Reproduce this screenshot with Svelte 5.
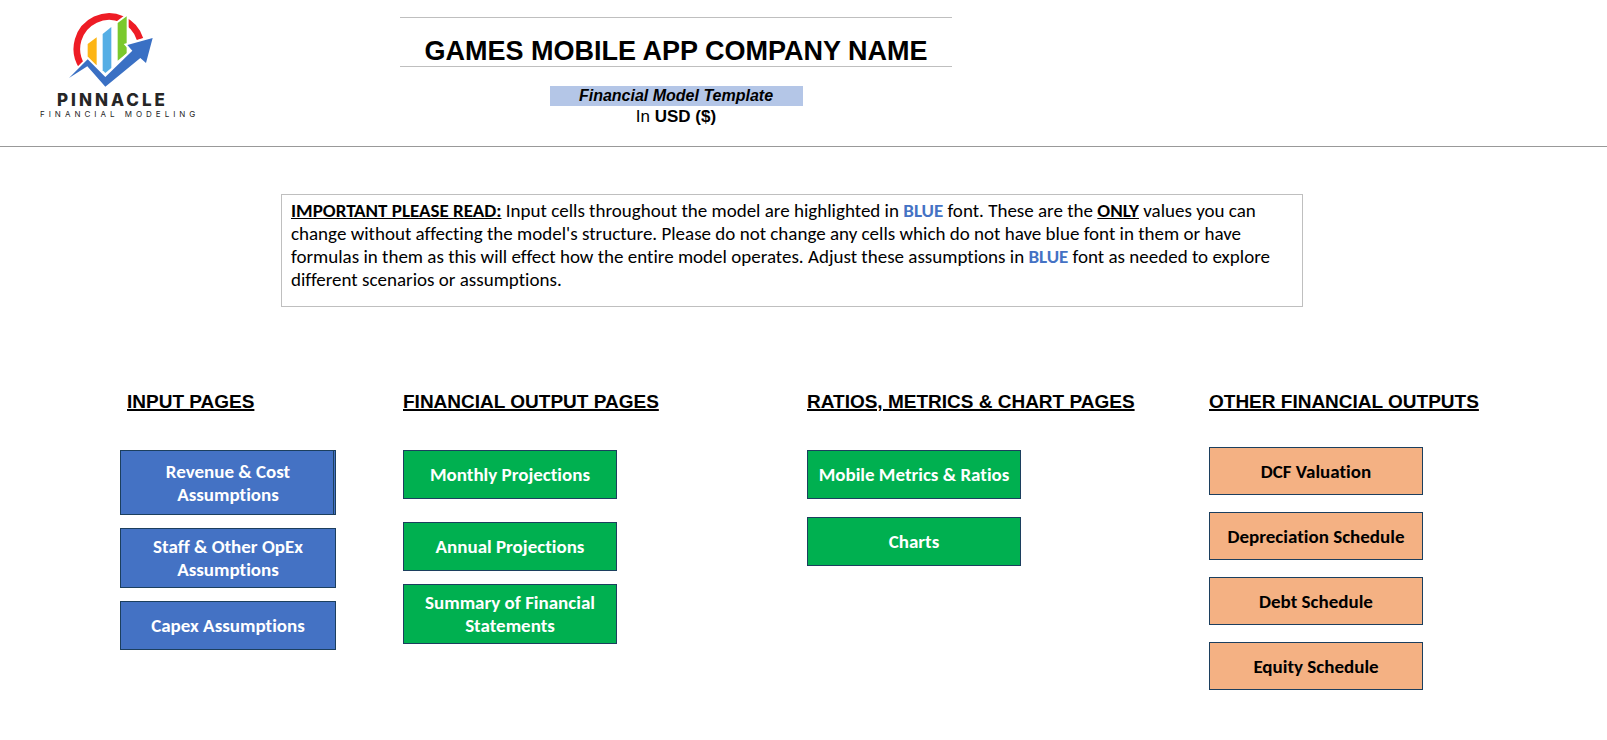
<script>
  const columns = [
    {
      title: 'INPUT PAGES',
      theme: 'blue',
      pages: [
        { label: 'Revenue & Cost Assumptions', size: 'tall', doubleEdge: true },
        { label: 'Staff & Other OpEx Assumptions', size: 'medium' },
        { label: 'Capex Assumptions' }
      ]
    },
    {
      title: 'FINANCIAL OUTPUT PAGES',
      theme: 'green',
      pages: [
        { label: 'Monthly Projections', spaced: true },
        { label: 'Annual Projections' },
        { label: 'Summary of Financial Statements', size: 'medium' }
      ]
    },
    {
      title: 'RATIOS, METRICS & CHART PAGES',
      theme: 'green wide',
      pages: [
        { label: 'Mobile Metrics & Ratios' },
        { label: 'Charts' }
      ]
    },
    {
      title: 'OTHER FINANCIAL OUTPUTS',
      theme: 'orange wide',
      pages: [
        { label: 'DCF Valuation' },
        { label: 'Depreciation Schedule' },
        { label: 'Debt Schedule' },
        { label: 'Equity Schedule' }
      ]
    }
  ];

  // Sheet anchors, e.g. "Debt Schedule" -> "#debt-schedule"
  function anchor(label) {
    return '#' + label.toLowerCase().replace(/[^a-z]+/g, '-');
  }
</script>

<header>
  <div class="logo">
    <svg viewBox="145 36 258 228" width="86" height="76" aria-hidden="true">
      <path d="M187 199 A97 97 0 1 1 361 117" fill="none" stroke="#ee1c25" stroke-width="20" />
      <!-- White outlines cut the gaps between the ring, bars and arrow -->
      <g stroke="#fff" stroke-width="12" paint-order="stroke">
        <path d="M204 132 L231 112 V195 H204 Z" fill="#fdb515" />
        <path d="M249 102 L275 81 V204 L257 219 L249 211 Z" fill="#55aee5" />
        <path d="M294 69 L321 49 V160 L294 182 Z" fill="#7ac92c" />
        <path d="M148 234 L204 178 L257 231 L338 152 L323 135 L399 114 L379 189 L362 174 L257 260 L203 199 Z" fill="#3a70c4" />
      </g>
    </svg>
    <div class="logo-name">PINNACLE</div>
    <div class="logo-sub">FINANCIAL MODELING</div>
  </div>
  <div class="heading">
    <h1>GAMES MOBILE APP COMPANY NAME</h1>
    <p class="subtitle">Financial Model Template</p>
    <p class="currency">In <b>USD ($)</b></p>
  </div>
</header>

<main>
  <p class="notice">
    <b class="underlined">IMPORTANT PLEASE READ:</b> Input cells throughout the model are highlighted in
    <b class="blue-text">BLUE</b> font. These are the <b class="underlined">ONLY</b> values you can change
    without affecting the model's structure. Please do not change any cells which do not have blue font in
    them or have formulas in them as this will effect how the entire model operates. Adjust these
    assumptions in <b class="blue-text">BLUE</b> font as needed to explore different scenarios or
    assumptions.
  </p>

  <nav>
    {#each columns as column}
      <section class={column.theme}>
        <h2>{column.title}</h2>
        <div class="links">
          {#each column.pages as page}
            <a
              href={anchor(page.label)}
              class={page.size}
              class:spaced={page.spaced}
              class:double-edge={page.doubleEdge}>{page.label}</a>
          {/each}
        </div>
      </section>
    {/each}
  </nav>
</main>

<style>
  :global(body) {
    margin: 0;
    background: #fff;
    color: #000;
    font-family: "Liberation Sans", Arial, sans-serif;
  }

  h1, h2, p {
    margin: 0;
  }

  /* Header */
  header {
    display: grid;
    grid-template-columns: 400fr 552fr 655fr;
    min-height: 146px;
    border-bottom: 1px solid #999;
  }

  .logo {
    margin: 12px 0 0 40px;
    color: #262626;
    font-family: Inter, sans-serif;
  }

  .logo svg {
    display: block;
    margin-left: 28px;
  }

  .logo-name {
    margin-left: 17px;
    font-size: 17px;
    font-weight: 800;
    line-height: 24px;
    letter-spacing: 3px;
  }

  .logo-sub {
    font-size: 8px;
    line-height: 4px;
    letter-spacing: 4px;
    white-space: nowrap;
  }

  .heading {
    display: flex;
    flex-direction: column;
    align-items: center;
    padding-top: 17px;
    text-align: center;
  }

  h1 {
    box-sizing: border-box;
    width: 100%;
    height: 50px;
    padding-top: 17px;
    border-top: 1px solid #bfbfbf;
    border-bottom: 1px solid #bfbfbf;
    font-size: 27px;
    line-height: 32px;
    white-space: nowrap;
  }

  .subtitle {
    width: 253px;
    margin-top: 19px;
    background: #b4c6e7;
    font-size: 16px;
    font-style: italic;
    font-weight: 700;
    line-height: 20px;
  }

  .currency {
    font-size: 17px;
    line-height: 21px;
  }

  /* Notice box */
  .notice {
    box-sizing: border-box;
    width: 1022px;
    max-width: 64%;
    min-height: 113px;
    margin: 47px 0 0 281px;
    padding: 4px 9px;
    border: 1px solid #bfbfbf;
    font-family: Carlito, Lato, sans-serif;
    font-size: 19px;
    font-variant-ligatures: none;
    line-height: 23px;
  }

  .underlined {
    text-decoration: underline;
  }

  .blue-text {
    color: #4472c4;
  }

  /* Page links */
  nav {
    display: grid;
    grid-template-columns: 283fr 404fr 402fr 398fr;
    padding: 83px 0 40px 120px;
  }

  h2 {
    margin-bottom: 36px;
    font-size: 19px;
    line-height: 24px;
    text-decoration: underline;
    text-decoration-thickness: 2px;
    white-space: nowrap;
  }

  .links {
    display: flex;
    flex-direction: column;
    align-items: flex-start;
    gap: 13px;
  }

  a {
    display: flex;
    box-sizing: border-box;
    align-items: center;
    justify-content: center;
    width: 214px;
    min-height: 49px;
    padding: 0 20px;
    border: 1px solid #1c3f5e;
    font-family: Carlito, Lato, sans-serif;
    font-size: 19px;
    font-variant-ligatures: none;
    font-weight: 700;
    line-height: 23px;
    text-align: center;
    text-decoration: none;
  }

  .medium {
    min-height: 60px;
  }

  .tall {
    min-height: 65px;
  }

  .spaced {
    margin-bottom: 10px;
  }

  .double-edge {
    box-shadow: inset -1px 0 #4472c4, inset -2px 0 #1c3f5e;
  }

  .wide .links {
    gap: 18px;
  }

  .wide a {
    padding: 0;
  }

  .blue h2 {
    padding-left: 7px;
  }

  .blue a {
    width: 216px;
    background: #4472c4;
    color: #fff;
  }

  .green a {
    background: #00b050;
    color: #fff;
  }

  .orange h2 {
    margin-bottom: 33px;
  }

  .orange .links {
    gap: 17px;
  }

  .orange a {
    min-height: 48px;
    background: #f4b183;
    color: #000;
  }
</style>
